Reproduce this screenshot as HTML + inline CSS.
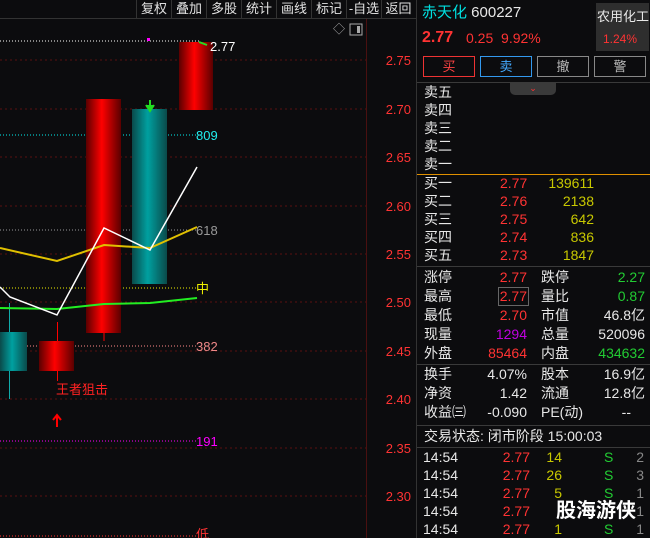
<!DOCTYPE html>
<html><head><meta charset="utf-8"><style>
*{margin:0;padding:0;box-sizing:border-box}
body{width:650px;height:538px;background:#0c0c0e;overflow:hidden;position:relative;font-family:"Liberation Sans","Noto Sans CJK SC",sans-serif;color:#ddd}
.a{position:absolute;white-space:nowrap;font-size:14px;line-height:17px}
.w{color:#e8e8e8}.r{color:#ff3333}.g{color:#22cc33}.y{color:#c8c800}.c{color:#00e0e0}
.tb{position:absolute;top:0;height:18px;border-left:1px solid #333;font-size:13px;line-height:17px;color:#e0e0e0;text-align:center}
.hl{position:absolute;left:417px;width:233px;height:1px;background:#3a3a3a}
</style></head><body>
<svg width="417" height="538" style="position:absolute;left:0;top:0">
<defs>
<linearGradient id="rg" x1="0" x2="1"><stop offset="0" stop-color="#5a0000"/><stop offset="0.45" stop-color="#ff0000"/><stop offset="1" stop-color="#5a0000"/></linearGradient>
<linearGradient id="cg" x1="0" x2="1"><stop offset="0" stop-color="#0a4a4a"/><stop offset="0.45" stop-color="#00a0a0"/><stop offset="1" stop-color="#0a4a4a"/></linearGradient>
</defs>
<line x1="0" y1="18.5" x2="417" y2="18.5" stroke="#333"/>
<line x1="366.5" y1="19" x2="366.5" y2="538" stroke="#4a1010"/>
<g stroke="#5a1010" stroke-dasharray="2,3">
<line x1="0" y1="60" x2="366" y2="60"/><line x1="0" y1="109" x2="366" y2="109"/><line x1="0" y1="157" x2="366" y2="157"/><line x1="0" y1="206" x2="366" y2="206"/><line x1="0" y1="254" x2="366" y2="254"/><line x1="0" y1="302" x2="366" y2="302"/><line x1="0" y1="351" x2="366" y2="351"/><line x1="0" y1="399" x2="366" y2="399"/><line x1="0" y1="448" x2="366" y2="448"/><line x1="0" y1="496" x2="366" y2="496"/>
</g>
<g fill="#ff3333" font-size="13" font-family="Liberation Sans" text-anchor="end">
<text x="411" y="65">2.75</text><text x="411" y="114">2.70</text><text x="411" y="162">2.65</text><text x="411" y="211">2.60</text><text x="411" y="259">2.55</text><text x="411" y="307">2.50</text><text x="411" y="356">2.45</text><text x="411" y="404">2.40</text><text x="411" y="453">2.35</text><text x="411" y="501">2.30</text>
</g>
<text x="333" y="33" fill="#aaa" font-size="12">◇</text>
<rect x="350" y="24" width="12" height="11" fill="none" stroke="#aaa"/><rect x="357" y="26" width="3" height="7" fill="#aaa"/>
<line x1="0" y1="41" x2="200" y2="41" stroke="#fff" stroke-dasharray="1,2"/>
<rect x="147" y="38" width="3" height="3" fill="#f0f"/>
<line x1="0" y1="135" x2="196" y2="135" stroke="#0ee" stroke-dasharray="1,2"/>
<line x1="0" y1="230" x2="196" y2="230" stroke="#999" stroke-dasharray="1,2"/>
<line x1="0" y1="288" x2="196" y2="288" stroke="#ee0" stroke-dasharray="1,2"/>
<line x1="0" y1="346" x2="196" y2="346" stroke="#f88" stroke-dasharray="1,2"/>
<line x1="0" y1="441" x2="196" y2="441" stroke="#f0f" stroke-dasharray="1,2"/>
<line x1="0" y1="536" x2="196" y2="536" stroke="#f33" stroke-dasharray="1,2"/>
<line x1="9.5" y1="303" x2="9.5" y2="399" stroke="#1aa"/>
<rect x="0" y="332" width="27" height="39" fill="url(#cg)"/>
<line x1="57.5" y1="322" x2="57.5" y2="381" stroke="#f00"/>
<rect x="39" y="341" width="35" height="30" fill="url(#rg)"/>
<line x1="104" y1="333" x2="104" y2="341" stroke="#f00"/>
<rect x="86" y="99" width="35" height="234" fill="url(#rg)"/>
<rect x="132" y="109" width="35" height="175" fill="url(#cg)"/>
<rect x="179" y="42" width="34" height="68" fill="url(#rg)"/>
<path d="M150 100 V110 M146 105 L150 111 L154 105" stroke="#2d2" stroke-width="2" fill="#2d2"/>
<path d="M199 42 L207 45" stroke="#2d2" stroke-width="2"/>
<path d="M57 427 V416 M53 420 L57 415 L61 420" stroke="#f00" stroke-width="2" fill="none"/>
<polyline points="0,308 57,309 104,304 150,303 197,298" fill="none" stroke="#22ee22" stroke-width="2"/>
<polyline points="0,248 57,261 104,245 150,248 197,227" fill="none" stroke="#e0c000" stroke-width="2"/>
<polyline points="0,287 10,297 57,315 104,228 150,250 197,167" fill="none" stroke="#fff" stroke-width="1.5"/>
<g font-size="13" font-family="Liberation Sans">
<text x="210" y="51" fill="#fff">2.77</text>
<text x="196" y="140" fill="#2ee">809</text>
<text x="196" y="235" fill="#999">618</text>
<text x="196" y="293" fill="#ee0" font-family="Noto Sans CJK SC">中</text>
<text x="196" y="351" fill="#e88">382</text>
<text x="196" y="446" fill="#f0f">191</text>
<text x="196" y="539" fill="#f33" font-family="Noto Sans CJK SC">低</text>
<text x="56" y="394" fill="#f22" font-family="Noto Sans CJK SC">王者狙击</text>
</g>
</svg>
<div class="tb" style="left:136px;width:35px">复权</div>
<div class="tb" style="left:171px;width:35px">叠加</div>
<div class="tb" style="left:206px;width:35px">多股</div>
<div class="tb" style="left:241px;width:35px">统计</div>
<div class="tb" style="left:276px;width:35px">画线</div>
<div class="tb" style="left:311px;width:35px">标记</div>
<div class="tb" style="left:346px;width:35px">-自选</div>
<div class="tb" style="left:381px;width:34px">返回</div>
<div style="position:absolute;left:416px;top:0;width:1px;height:538px;background:#333"></div>
<div class="a c" style="left:422px;top:4px;font-size:15px">赤天化 <span class="w">600227</span></div>
<div class="a r" style="left:422px;top:29px;font-size:16px;font-weight:bold">2.77</div>
<div class="a r" style="left:466px;top:30px;font-size:14px">0.25 &nbsp;9.92%</div>
<div style="position:absolute;left:596px;top:3px;width:53px;height:48px;background:#2e2e2e"></div>
<div class="a w" style="left:597px;top:8px;font-size:13px">农用化工</div>
<div class="a r" style="left:603px;top:31px;font-size:12px">1.24%</div>
<div style="position:absolute;left:423px;top:56px;width:52px;height:21px;border:1px solid #e33;color:#f44;text-align:center;font-size:13px;line-height:19px">买</div>
<div style="position:absolute;left:480px;top:56px;width:52px;height:21px;border:1px solid #39e;color:#4af;text-align:center;font-size:13px;line-height:19px">卖</div>
<div style="position:absolute;left:537px;top:56px;width:52px;height:21px;border:1px solid #888;color:#bbb;text-align:center;font-size:13px;line-height:19px">撤</div>
<div style="position:absolute;left:594px;top:56px;width:52px;height:21px;border:1px solid #888;color:#bbb;text-align:center;font-size:13px;line-height:19px">警</div>
<div class="hl" style="top:82px"></div>
<div style="position:absolute;left:510px;top:83px;width:46px;height:12px;background:#3a3a3a;border-radius:0 0 5px 5px;color:#f33;font-size:9px;text-align:center;line-height:11px">⌄</div>
<div class="a w" style="left:424px;top:84px">卖五</div>
<div class="a w" style="left:424px;top:102px">卖四</div>
<div class="a w" style="left:424px;top:120px">卖三</div>
<div class="a w" style="left:424px;top:138px">卖二</div>
<div class="a w" style="left:424px;top:156px">卖一</div>
<div class="hl" style="top:174px;background:#e09000"></div>
<div class="a w" style="left:424px;top:175px">买一</div><div class="a r" style="left:500px;top:175px">2.77</div><div class="a y" style="right:56px;top:175px">139611</div>
<div class="a w" style="left:424px;top:193px">买二</div><div class="a r" style="left:500px;top:193px">2.76</div><div class="a y" style="right:56px;top:193px">2138</div>
<div class="a w" style="left:424px;top:211px">买三</div><div class="a r" style="left:500px;top:211px">2.75</div><div class="a y" style="right:56px;top:211px">642</div>
<div class="a w" style="left:424px;top:229px">买四</div><div class="a r" style="left:500px;top:229px">2.74</div><div class="a y" style="right:56px;top:229px">836</div>
<div class="a w" style="left:424px;top:247px">买五</div><div class="a r" style="left:500px;top:247px">2.73</div><div class="a y" style="right:56px;top:247px">1847</div>
<div class="hl" style="top:266px"></div>
<div class="a w" style="left:424px;top:269px">涨停</div><div class="a r" style="right:123px;top:269px">2.77</div><div class="a w" style="left:541px;top:269px">跌停</div><div class="a g" style="right:5px;top:269px">2.27</div>
<div class="a w" style="left:424px;top:288px">最高</div><div class="a r" style="right:121px;top:287px;border:1px solid #666;padding:0 1px">2.77</div><div class="a w" style="left:541px;top:288px">量比</div><div class="a g" style="right:5px;top:288px">0.87</div>
<div class="a w" style="left:424px;top:307px">最低</div><div class="a r" style="right:123px;top:307px">2.70</div><div class="a w" style="left:541px;top:307px">市值</div><div class="a w" style="right:5px;top:307px">46.8亿</div>
<div class="a w" style="left:424px;top:326px">现量</div><div class="a" style="right:123px;top:326px;color:#c000e0">1294</div><div class="a w" style="left:541px;top:326px">总量</div><div class="a w" style="right:5px;top:326px">520096</div>
<div class="a w" style="left:424px;top:345px">外盘</div><div class="a r" style="right:123px;top:345px">85464</div><div class="a w" style="left:541px;top:345px">内盘</div><div class="a g" style="right:5px;top:345px">434632</div>
<div class="hl" style="top:364px"></div>
<div class="a w" style="left:424px;top:366px">换手</div><div class="a w" style="right:123px;top:366px">4.07%</div><div class="a w" style="left:541px;top:366px">股本</div><div class="a w" style="right:5px;top:366px">16.9亿</div>
<div class="a w" style="left:424px;top:385px">净资</div><div class="a w" style="right:123px;top:385px">1.42</div><div class="a w" style="left:541px;top:385px">流通</div><div class="a w" style="right:5px;top:385px">12.8亿</div>
<div class="a w" style="left:424px;top:404px">收益㈢</div><div class="a w" style="right:123px;top:404px">-0.090</div><div class="a w" style="left:541px;top:404px">PE(动)</div><div class="a w" style="right:19px;top:404px">--</div>
<div class="hl" style="top:425px"></div>
<div class="a w" style="left:424px;top:428px">交易状态: 闭市阶段 15:00:03</div>
<div class="hl" style="top:447px"></div>
<div class="a w" style="left:423px;top:449px">14:54</div><div class="a r" style="right:120px;top:449px">2.77</div><div class="a y" style="right:88px;top:449px">14</div><div class="a g" style="left:604px;top:449px">S</div><div class="a" style="right:6px;top:449px;color:#888">2</div>
<div class="a w" style="left:423px;top:467px">14:54</div><div class="a r" style="right:120px;top:467px">2.77</div><div class="a y" style="right:88px;top:467px">26</div><div class="a g" style="left:604px;top:467px">S</div><div class="a" style="right:6px;top:467px;color:#888">3</div>
<div class="a w" style="left:423px;top:485px">14:54</div><div class="a r" style="right:120px;top:485px">2.77</div><div class="a y" style="right:88px;top:485px">5</div><div class="a g" style="left:604px;top:485px">S</div><div class="a" style="right:6px;top:485px;color:#888">1</div>
<div class="a w" style="left:423px;top:503px">14:54</div><div class="a r" style="right:120px;top:503px">2.77</div><div class="a" style="right:6px;top:503px;color:#888">1</div>
<div class="a w" style="left:423px;top:521px">14:54</div><div class="a r" style="right:120px;top:521px">2.77</div><div class="a y" style="right:88px;top:521px">1</div><div class="a g" style="left:604px;top:521px">S</div><div class="a" style="right:6px;top:521px;color:#888">1</div>
<div class="a" style="left:556px;top:499px;font-size:20px;line-height:24px;color:#fff;font-weight:bold">股海游侠</div>
</body></html>
